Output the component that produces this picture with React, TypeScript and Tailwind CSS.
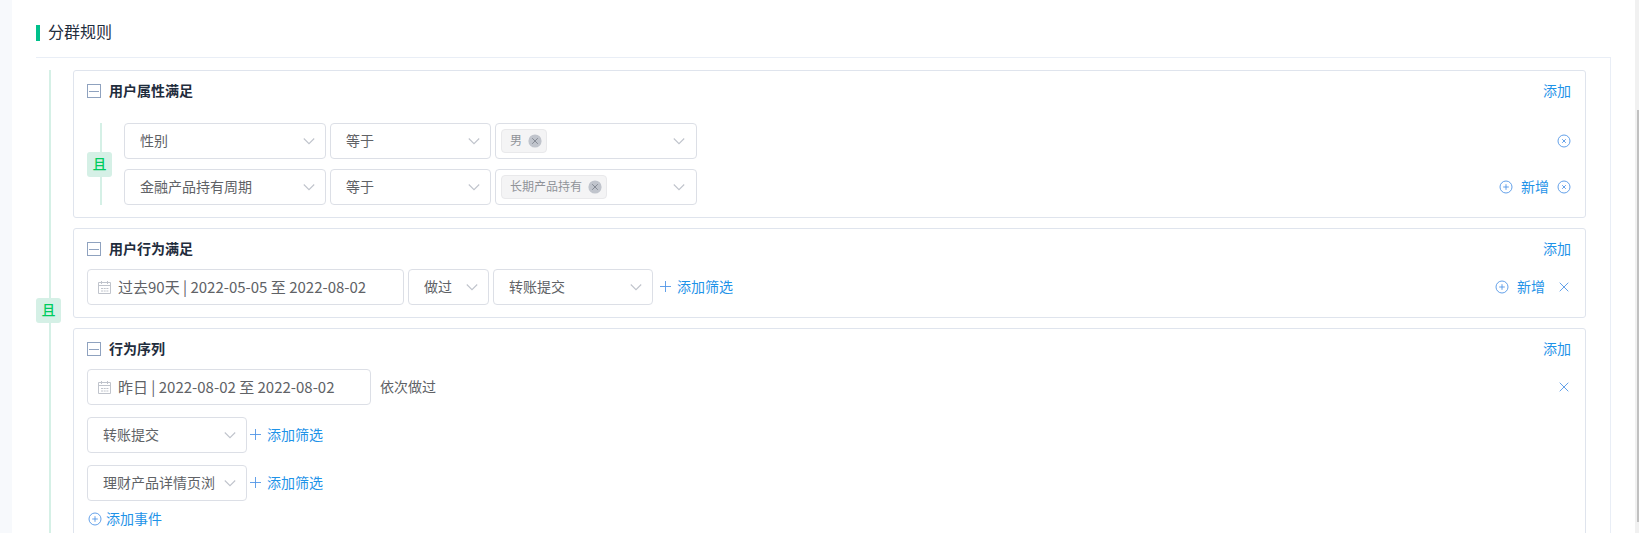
import type { ReactNode } from "react";

interface SelectProps {
  label: string;
  value: string;
  className: string;
}

export default function App() {
  return (
    <div
      className="flex h-screen overflow-hidden bg-white text-sm leading-5 text-[#606266]"
      style={{ fontFamily: "'Open Sans', 'Noto Sans CJK SC', sans-serif" }}
    >
      <div className="w-3 shrink-0 bg-[#f7f9fc]" />

      <main className="min-w-0 flex-1 px-6">
        {/* Section title */}
        <div className="flex items-center gap-2 pt-[21px] pb-3">
          <span className="h-4 w-1 bg-[#00c08b]" />
          <h1 className="pb-0.5 text-base leading-[22px] text-[#1f2d3d]">分群规则</h1>
        </div>

        <div className="flex gap-3 border-t border-r border-[#e9eef6] pt-3 pr-6">
          <Relation />

          <div className="flex min-w-0 flex-1 flex-col gap-2.5">
            {/* User attributes */}
            <RuleCard title="用户属性满足">
              <div className="flex gap-3 pt-3">
                <Relation />
                <div className="flex flex-1 flex-col gap-2.5">
                  <div className="flex items-center gap-1">
                    <Select label="属性" value="性别" className="w-[202px]" />
                    <Select label="条件" value="等于" className="w-[161px]" />
                    <TagSelect tag="男" />
                    <div className="ml-auto flex items-center">
                      <IconButton label="删除"><CircleClose /></IconButton>
                    </div>
                  </div>
                  <div className="flex items-center gap-1">
                    <Select label="属性" value="金融产品持有周期" className="w-[202px]" />
                    <Select label="条件" value="等于" className="w-[161px]" />
                    <TagSelect tag="长期产品持有" />
                    <div className="ml-auto flex items-center gap-2">
                      <LinkButton className="gap-2" icon={<CirclePlus />}>新增</LinkButton>
                      <IconButton label="删除"><CircleClose /></IconButton>
                    </div>
                  </div>
                </div>
              </div>
            </RuleCard>

            {/* User behaviour */}
            <RuleCard title="用户行为满足">
              <div className="flex items-center gap-1">
                <DateInput value="过去90天 | 2022-05-05 至 2022-08-02" className="w-[317px]" />
                <Select label="是否做过" value="做过" className="w-[81px]" />
                <Select label="事件" value="转账提交" className="w-40" />
                <LinkButton className="gap-1 pl-0.5" icon={<Plus />}>添加筛选</LinkButton>
                <div className="ml-auto flex items-center gap-3">
                  <LinkButton className="gap-2" icon={<CirclePlus />}>新增</LinkButton>
                  <IconButton label="删除"><Close /></IconButton>
                </div>
              </div>
            </RuleCard>

            {/* Behaviour sequence */}
            <RuleCard title="行为序列">
              <div className="flex items-center gap-[9px]">
                <DateInput value="昨日 | 2022-08-02 至 2022-08-02" className="w-[284px]" />
                <span>依次做过</span>
                <div className="ml-auto flex items-center">
                  <IconButton label="删除"><Close /></IconButton>
                </div>
              </div>
              <div className="mt-3 flex items-center gap-0.5">
                <Select label="事件" value="转账提交" className="w-40" />
                <LinkButton className="gap-1" icon={<Plus />}>添加筛选</LinkButton>
              </div>
              <div className="mt-3 flex items-center gap-0.5">
                <Select label="事件" value="理财产品详情页浏览" className="w-40" />
                <LinkButton className="gap-1" icon={<Plus />}>添加筛选</LinkButton>
              </div>
              <div className="flex px-px py-2">
                <LinkButton className="gap-1" icon={<CirclePlus />}>添加事件</LinkButton>
              </div>
            </RuleCard>
          </div>
        </div>
      </main>

      {/* Scrollbar */}
      <div className="w-1 shrink-0 bg-[#f1f1f1] pt-[110px] pl-0.5">
        <div className="h-[412px] bg-[#c1c1c1]" />
      </div>
    </div>
  );
}

function Relation() {
  return (
    <div className="flex w-[25px] shrink-0 flex-col">
      <span className="ml-[13px] w-0.5 flex-1 bg-[#d5f0e6]" />
      <span className="flex h-[25px] items-center justify-center rounded-[3px] bg-[#d5f0e6] font-medium text-[#00cc5e]">
        且
      </span>
      <span className="ml-[13px] w-0.5 flex-1 bg-[#d5f0e6]" />
    </div>
  );
}

function RuleCard({ title, children }: { title: string; children: ReactNode }) {
  return (
    <section className="rounded-[3px] border border-[#dfe4ed] pt-2.5 pr-3.5 pb-3 pl-[13px]">
      <div className="mb-2.5 flex items-center gap-2">
        <button type="button" aria-label="收起">
          <svg className="block" width="14" height="14" viewBox="0 0 14 14" fill="none" stroke="#8fa2bf">
            <rect x="0.5" y="0.5" width="13" height="13" />
            <path d="M2 7.5h10" />
          </svg>
        </button>
        <h2 className="font-bold text-[#1f2d3d]">{title}</h2>
        <LinkButton className="ml-auto">添加</LinkButton>
      </div>
      {children}
    </section>
  );
}

function Select({ label, value, className }: SelectProps) {
  return (
    <div className={`relative shrink-0 ${className}`}>
      <select
        aria-label={label}
        className="block h-9 w-full appearance-none rounded border border-[#dcdfe6] bg-white pr-[31px] pl-[15px]"
      >
        <option>{value}</option>
      </select>
      <Chevron />
    </div>
  );
}

function TagSelect({ tag }: { tag: string }) {
  return (
    <div className="relative flex h-9 w-[202px] shrink-0 items-center rounded border border-[#dcdfe6] pl-[5px]">
      <span className="flex h-6 items-center gap-1.5 rounded border border-[#e9e9eb] bg-[#f4f4f5] pr-1 pl-2 text-xs text-[#909399]">
        {tag}
        <button type="button" aria-label={`移除${tag}`}>
          <svg className="block" width="14" height="14" viewBox="0 0 14 14" fill="none" stroke="#868b95">
            <circle cx="7" cy="7" r="6.6" fill="#c0c4cc" stroke="none" />
            <path d="M4.2 4.2l5.6 5.6M9.8 4.2l-5.6 5.6" />
          </svg>
        </button>
      </span>
      <Chevron />
    </div>
  );
}

function DateInput({ value, className }: { value: string; className: string }) {
  return (
    <div className={`relative shrink-0 ${className}`}>
      <input
        type="text"
        aria-label="日期范围"
        defaultValue={value}
        className="block h-9 w-full rounded border border-[#dcdfe6] bg-white pr-2 pb-0.5 pl-[30px] font-['Noto_Sans_CJK_SC',sans-serif] text-[15px]"
      />
      <svg
        className="pointer-events-none absolute top-3 left-[11px]"
        width="14"
        height="14"
        viewBox="0 0 14 14"
        fill="none"
        stroke="#c0c4cc"
      >
        <path d="M0.5 1.5h12v11h-12zM0.5 4.5h12M3.5 0v3M9.5 0v3" />
        <path d="M3 7.5h2M5.7 7.5h2M8.4 7.5h2M3 10h2M5.7 10h2M8.4 10h2" />
      </svg>
    </div>
  );
}

function LinkButton({ icon, className, children }: { icon?: ReactNode; className: string; children: ReactNode }) {
  return (
    <button type="button" className={`flex shrink-0 items-center text-[#1f93e8] ${className}`}>
      {icon}
      {children}
    </button>
  );
}

function IconButton({ label, children }: { label: string; children: ReactNode }) {
  return (
    <button type="button" aria-label={label}>
      {children}
    </button>
  );
}

function Chevron() {
  return (
    <svg
      className="pointer-events-none absolute top-1/2 right-2.5 -translate-y-1/2"
      width="14"
      height="14"
      viewBox="0 0 14 14"
      fill="none"
      stroke="#c0c4cc"
      strokeWidth="1.1"
    >
      <path d="M1.8 4.5L7 9.7l5.2-5.2" />
    </svg>
  );
}

function Icon({ children }: { children: ReactNode }) {
  return (
    <svg className="block" width="14" height="14" viewBox="0 0 14 14" fill="none" stroke="#5296e6" strokeWidth="0.9">
      {children}
    </svg>
  );
}

function CircleClose() {
  return (
    <Icon>
      <circle cx="7" cy="7" r="6" />
      <path d="M5.2 5.2l3.6 3.6M8.8 5.2L5.2 8.8" />
    </Icon>
  );
}

function CirclePlus() {
  return (
    <Icon>
      <circle cx="7" cy="7" r="6" />
      <path d="M7 4.2v5.6M4.2 7h5.6" />
    </Icon>
  );
}

function Plus() {
  return (
    <Icon>
      <path d="M6.5 1v11M1 6.5h11" />
    </Icon>
  );
}

function Close() {
  return (
    <Icon>
      <path d="M2.7 2.7l8.6 8.6M11.3 2.7l-8.6 8.6" />
    </Icon>
  );
}
